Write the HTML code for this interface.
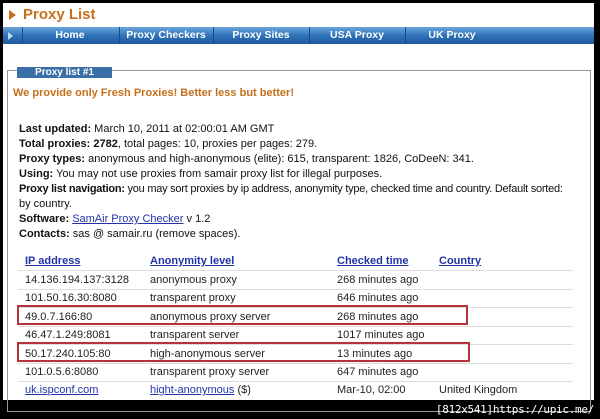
<!DOCTYPE html><html><head><style>
body{margin:0;width:600px;height:419px;background:#000;position:relative;overflow:hidden;font-family:"Liberation Sans",Arial,sans-serif}
.pg{position:absolute;left:3px;top:3px;width:591px;height:397px;background:#fff}
.a{position:absolute;white-space:nowrap}
.t{font-size:11px;color:#111}
.nav{position:absolute;left:0;top:24px;width:591px;height:17px;background:linear-gradient(#6aa6dc,#2f73b8 50%,#1d5a9c);}
.nav span{position:absolute;top:2px;color:#fff;font-weight:bold;font-size:10.5px;transform:translateX(-50%)}
.sep{position:absolute;top:0;width:1px;height:17px;background:#174b84}
.row{position:absolute;left:15px;width:555px;border-bottom:1px solid #ddd;height:18px}
.row span{position:absolute;top:3px;font-size:11px;color:#222}
a{color:#2233aa;text-decoration:underline}
.hd span{font-weight:bold}
.rb{position:absolute;border:2px solid #b8323c}
</style></head><body><div class="pg">
<div class="a" style="left:6px;top:7px;width:0;height:0;border-left:7px solid #c4701c;border-top:5px solid transparent;border-bottom:5px solid transparent"></div>
<div class="a" style="left:20px;top:3px;font-size:15px;font-weight:bold;color:#c4701c">Proxy List</div>
<div class="nav">
<div class="a" style="left:5px;top:5px;border-left:5px solid #bde;border-top:4px solid transparent;border-bottom:4px solid transparent"></div>
<div class="sep" style="left:19px"></div><div class="sep" style="left:116px"></div><div class="sep" style="left:210px"></div><div class="sep" style="left:306px"></div><div class="sep" style="left:402px"></div>
<span style="left:67px">Home</span><span style="left:163px">Proxy Checkers</span><span style="left:258px">Proxy Sites</span><span style="left:354px">USA Proxy</span><span style="left:449px">UK Proxy</span>
</div>
<div class="a" style="left:4px;top:67px;width:582px;height:340px;border:1px solid #999"></div>
<div class="a" style="left:14px;top:64px;width:95px;height:11px;background:#3a6fa8;color:#fff;font-size:10px;font-weight:bold;line-height:12px;text-align:center">Proxy list #1</div>
<div class="a" style="left:10px;top:84px;font-size:11px;font-weight:bold;color:#c4701c">We provide only Fresh Proxies! Better less but better!</div>
<div class="a t" style="left:16px;top:119px;line-height:15px">
<b>Last updated:</b> March 10, 2011 at 02:00:01 AM GMT<br>
<b>Total proxies: 2782</b>, total pages: 10, proxies per pages: 279.<br>
<b>Proxy types:</b> anonymous and high-anonymous (elite): 615, transparent: 1826, CoDeeN: 341.<br>
<b>Using:</b> You may not use proxies from samair proxy list for illegal purposes.<br>
<span style="letter-spacing:-0.25px"><b>Proxy list navigation:</b> you may sort proxies by ip address, anonymity type, checked time and country. Default sorted:</span><br>by country.<br>
<b>Software:</b> <a>SamAir Proxy Checker</a> v 1.2<br>
<b>Contacts:</b> sas @ samair.ru (remove spaces).</div>
<div class="row hd" style="top:249px"><span style="left:7px"><a>IP address</a></span><span style="left:132px"><a>Anonymity level</a></span><span style="left:319px"><a>Checked time</a></span><span style="left:421px"><a>Country</a></span></div>
<div class="row" style="top:268px"><span style="left:7px">14.136.194.137:3128</span><span style="left:132px">anonymous proxy</span><span style="left:319px">268 minutes ago</span></div>
<div class="row" style="top:286px"><span style="left:7px">101.50.16.30:8080</span><span style="left:132px">transparent proxy</span><span style="left:319px">646 minutes ago</span></div>
<div class="row" style="top:305px"><span style="left:7px">49.0.7.166:80</span><span style="left:132px">anonymous proxy server</span><span style="left:319px">268 minutes ago</span></div>
<div class="row" style="top:323px"><span style="left:7px">46.47.1.249:8081</span><span style="left:132px">transparent server</span><span style="left:319px">1017 minutes ago</span></div>
<div class="row" style="top:342px"><span style="left:7px">50.17.240.105:80</span><span style="left:132px">high-anonymous server</span><span style="left:319px">13 minutes ago</span></div>
<div class="row" style="top:360px"><span style="left:7px">101.0.5.6:8080</span><span style="left:132px">transparent proxy server</span><span style="left:319px">647 minutes ago</span></div>
<div class="row" style="top:378px;border:0"><span style="left:7px"><a>uk.ispconf.com</a></span><span style="left:132px"><a>hight-anonymous</a> ($)</span><span style="left:319px">Mar-10, 02:00</span><span style="left:421px">United Kingdom</span></div>
<div class="rb" style="left:14px;top:302px;width:447px;height:16px"></div>
<div class="rb" style="left:14px;top:339px;width:449px;height:16px"></div>
</div>
<div class="a" style="right:6px;top:403px;color:#fff;font-size:11px;letter-spacing:-0.3px;font-family:'DejaVu Sans Mono',monospace">[812x541]https://upic.me/</div>
</body></html>
